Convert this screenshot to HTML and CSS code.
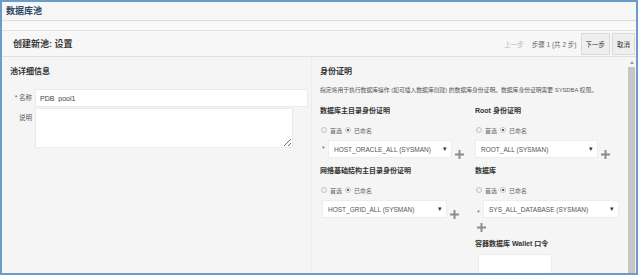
FILE: index.html
```html
<!DOCTYPE html>
<html lang="zh-CN">
<head>
    <meta charset="UTF-8">
    <title>数据库池</title>
    <link rel="stylesheet" href="styles.css">
</head>
<body>

<div class="frame">
    <div class="appbar">数据库池</div>
    <div class="subbar"></div>

    <!-- 向导标题和按钮 -->
    <div class="train">
        <h1>创建新池: 设置</h1>
        <div class="nav">
            <span class="prev">上一步</span>
            <span class="step">步骤 1 (共 2 步)</span>
            <button>下一步</button>
            <button>取消</button>
        </div>
    </div>

    <div class="content">
        <section class="details">
            <h2>池详细信息</h2>
            <div class="form">
                <label><span class="req">*</span> 名称</label>
                <input type="text" class="text" value="PDB_pool1">
                <label class="top">说明</label>
                <textarea class="area"></textarea>
            </div>
        </section>

        <section class="creds">
            <h2>身份证明</h2>
            <p class="hint">指定将用于执行数据库操作 (如可插入数据库创建) 的数据库身份证明。数据库身份证明需要 SYSDBA 权限。</p>

            <div class="cred-grid">
                <div class="cred">
                    <h3>数据库主目录身份证明</h3>
                    <div class="radios"><span class="radio"></span>首选 <span class="radio on"></span>已命名</div>
                    <div class="field">
                        <span class="req">*</span>
                        <div class="select w-oracle"><span>HOST_ORACLE_ALL (SYSMAN)</span><span class="caret">▾</span></div>
                        <svg class="plus" width="9" height="9" viewBox="0 0 9 9"><path d="M4.5 0V9M0 4.5H9" stroke="#8c8c8c" stroke-width="2"/></svg>
                    </div>
                </div>

                <div class="cred">
                    <h3>Root 身份证明</h3>
                    <div class="radios"><span class="radio"></span>首选 <span class="radio on"></span>已命名</div>
                    <div class="field">
                        <div class="select w-root"><span>ROOT_ALL (SYSMAN)</span><span class="caret">▾</span></div>
                        <svg class="plus" width="9" height="9" viewBox="0 0 9 9"><path d="M4.5 0V9M0 4.5H9" stroke="#8c8c8c" stroke-width="2"/></svg>
                    </div>
                </div>

                <div class="cred">
                    <h3>网络基础结构主目录身份证明</h3>
                    <div class="radios"><span class="radio"></span>首选 <span class="radio on"></span>已命名</div>
                    <div class="field">
                        <div class="select w-grid"><span>HOST_GRID_ALL (SYSMAN)</span><span class="caret">▾</span></div>
                        <svg class="plus" width="9" height="9" viewBox="0 0 9 9"><path d="M4.5 0V9M0 4.5H9" stroke="#8c8c8c" stroke-width="2"/></svg>
                    </div>
                </div>

                <div class="cred">
                    <h3>数据库</h3>
                    <div class="radios"><span class="radio"></span>首选 <span class="radio on"></span>已命名</div>
                    <div class="field">
                        <span class="req low">*</span>
                        <div class="select w-db"><span>SYS_ALL_DATABASE (SYSMAN)</span><span class="caret">▾</span></div>
                    </div>
                    <svg class="plus wrap" width="9" height="9" viewBox="0 0 9 9"><path d="M4.5 0V9M0 4.5H9" stroke="#8c8c8c" stroke-width="2"/></svg>
                    <h3 class="wallet">容器数据库 Wallet 口令</h3>
                    <input type="password" class="text pwd">
                </div>
            </div>
        </section>

        <div class="scroll"><span class="arrow"></span><span class="thumb"></span></div>
    </div>
</div>

</body>
</html>
```

FILE: styles.css
```css
* {
    box-sizing: border-box;
}
body {
    margin: 0;
    font-family: "Liberation Sans", "Noto Sans CJK SC", sans-serif;
    color: #333;
    background: #fff;
}
.frame {
    width: 638px;
    height: 275px;
    border: 2px solid #6a9bcb;
    display: flex;
    flex-direction: column;
    overflow: hidden;
    background: #f5f5f5;
}
.appbar {
    height: 19px;
    line-height: 18px;
    padding-left: 4px;
    font-size: 9px;
    font-weight: bold;
    color: #2c4866;
    background: #f6f6f6;
    border-bottom: 1px solid #dedede;
}
.subbar {
    height: 10px;
    background: #f9f9f9;
    border-bottom: 1px solid #e2e2e2;
}
.train {
    height: 26px;
    display: flex;
    align-items: center;
    padding: 0 1px 0 11px;
    background: #f7f7f7;
    border-bottom: 1px solid #e0e0e0;
}
.train h1 {
    margin: 0;
    font-size: 9px;
    font-weight: bold;
    color: #3a3a3a;
}
.nav {
    margin-left: auto;
    display: flex;
    align-items: center;
    font-size: 6.5px;
}
.prev {
    color: #b8b8b8;
    margin-right: 8px;
}
.step {
    color: #666;
    margin-right: 2px;
}
.nav button {
    height: 22px;
    margin-left: 2px;
    padding: 0 4px;
    font-family: inherit;
    font-size: 6.5px;
    color: #333;
    background: #efefef;
    border: 1px solid #d9d9d9;
    border-radius: 1px;
}
.content {
    flex: 1;
    display: flex;
    min-height: 0;
}
.details {
    width: 310px;
    padding: 9px 0 0 8px;
    border-right: 1px solid #ececec;
}
h2 {
    margin: 0;
    font-size: 8px;
    line-height: 12px;
    font-weight: bold;
    color: #333;
}
.form {
    display: grid;
    grid-template-columns: 25px auto;
    row-gap: 1px;
    margin-top: 11px;
}
.form label {
    padding-right: 3px;
    font-size: 6.5px;
    line-height: 18px;
    color: #555;
    text-align: right;
}
.form label.top {
    line-height: 12px;
    padding-top: 4px;
}
.req {
    color: #3b6ea5;
}
.text {
    height: 18px;
    width: 273px;
    padding: 0 4px;
    font-family: inherit;
    font-size: 7px;
    line-height: 10px;
    color: #444;
    background: #fff;
    border: 1px solid #ebebeb;
    outline: none;
}
.area {
    width: 258px;
    height: 40px;
    background: #fff;
    border: 1px solid #ebebeb;
}
.creds {
    flex: 1;
    padding: 9px 0 0 8px;
}
.hint {
    margin: 8px 0 0;
    font-size: 5.8px;
    line-height: 8px;
    color: #555;
}
.cred-grid {
    display: grid;
    grid-template-columns: 155px 150px;
    row-gap: 7px;
    margin-top: 12px;
}
h3 {
    margin: 0;
    font-size: 7px;
    line-height: 10px;
    font-weight: bold;
    color: #333;
}
.radios {
    display: flex;
    align-items: center;
    margin-top: 9px;
    height: 10px;
    font-size: 6px;
    color: #666;
}
.radio {
    width: 6px;
    height: 6px;
    margin: 0 3px 0 1px;
    border: 1px solid #c4c4c4;
    border-radius: 50%;
    background: #f2f2f2;
}
.radio.on {
    margin-left: 3px;
    background: radial-gradient(circle, #666 0 1.2px, #fff 1.6px);
}
.field {
    display: flex;
    align-items: flex-start;
    margin-top: 5px;
}
.field .req {
    width: 8px;
    padding-left: 2px;
    font-size: 7px;
    line-height: 18px;
}
.field .req.low {
    padding-top: 4px;
}
.select {
    height: 18px;
    display: flex;
    align-items: center;
    justify-content: space-between;
    padding: 0 4px 0 5px;
    font-size: 6.5px;
    color: #555;
    background: #fff;
    border: 1px solid #ededed;
}
.caret {
    font-size: 7px;
    color: #333;
}
.w-oracle { width: 124px; }
.w-root { width: 123px; }
.w-grid { width: 125px; margin-left: 2px; }
.w-db { width: 136px; }
.plus {
    margin: 10px 0 0 3px;
}
.plus.wrap {
    display: block;
    margin: 1px 0 0 2px;
}
.wallet {
    margin-top: 7px;
}
.pwd {
    width: 74px;
    height: 20px;
    margin: 5px 0 0 3px;
}
.scroll {
    width: 11px;
    padding: 4px 0 0 3px;
}
.arrow {
    display: block;
    width: 0;
    height: 0;
    margin-left: 2px;
    border-left: 2px solid transparent;
    border-right: 2px solid transparent;
    border-bottom: 3px solid #9a9a9a;
}
.thumb {
    display: block;
    width: 7px;
    height: 210px;
    margin-top: 3px;
    background: #c9c5c1;
}
```
